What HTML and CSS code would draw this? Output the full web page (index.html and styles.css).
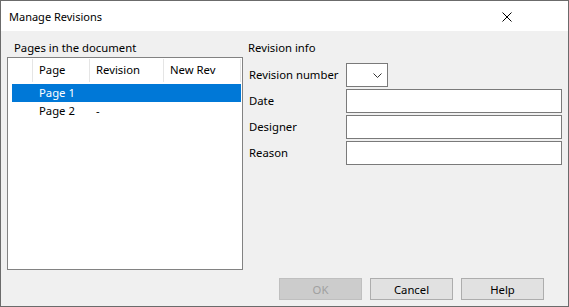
FILE: index.html
```html
<!DOCTYPE html>
<html lang="en">
<head>
    <meta charset="UTF-8">
    <title>Manage Revisions</title>
    <link rel="stylesheet" href="styles.css">
</head>
<body>
    <div class="dialog">
        <div class="titlebar">
            <span class="title">Manage Revisions</span>
            <button class="close-btn" aria-label="Close">
                <svg width="10" height="10" viewBox="0 0 10 10">
                    <path d="M0.5 0.5 L9.5 9.5 M9.5 0.5 L0.5 9.5" stroke="#000" stroke-width="1" fill="none"/>
                </svg>
            </button>
        </div>

        <div class="dialog-body">
            <div class="main">
                <div class="pages-group">
                    <div class="group-label">Pages in the document</div>
                    <div class="listview">
                        <div class="lv-header">
                            <div class="lv-col col-icon"></div>
                            <div class="lv-col col-page">Page</div>
                            <div class="lv-col col-rev">Revision</div>
                            <div class="lv-col col-new">New Rev</div>
                        </div>
                        <div class="lv-rows">
                            <div class="lv-row selected">
                                <span class="cell col-page">Page 1</span>
                                <span class="cell col-rev"></span>
                                <span class="cell col-new"></span>
                            </div>
                            <div class="lv-row">
                                <span class="cell col-page">Page 2</span>
                                <span class="cell col-rev">-</span>
                                <span class="cell col-new"></span>
                            </div>
                        </div>
                    </div>
                </div>

                <div class="info-group">
                    <div class="group-label">Revision info</div>
                    <div class="info-form">
                        <label class="field-label">Revision number</label>
                        <div class="combo">
                            <svg width="9" height="5" viewBox="0 0 9 5">
                                <path d="M0.5 0.5 L4.5 4.5 L8.5 0.5" stroke="#333" stroke-width="1" fill="none"/>
                            </svg>
                        </div>

                        <label class="field-label">Date</label>
                        <input class="text-input" type="text">

                        <label class="field-label">Designer</label>
                        <input class="text-input" type="text">

                        <label class="field-label">Reason</label>
                        <input class="text-input" type="text">
                    </div>
                </div>
            </div>

            <div class="button-row">
                <button class="btn" disabled>OK</button>
                <button class="btn">Cancel</button>
                <button class="btn">Help</button>
            </div>
        </div>
    </div>
</body>
</html>
```

FILE: styles.css
```css
* {
    margin: 0;
    padding: 0;
    box-sizing: border-box;
}

body {
    width: 569px;
    height: 307px;
    font-family: "Noto Sans", "Open Sans", sans-serif;
    font-size: 11.3px;
    color: #000;
    background: #fff;
}

.dialog {
    width: 569px;
    height: 307px;
    border: 1px solid #6b6b6b;
    background: #f0f0f0;
    display: flex;
    flex-direction: column;
}

.titlebar {
    height: 30px;
    background: #fff;
    display: flex;
    align-items: center;
    justify-content: space-between;
    padding-left: 8px;
    padding-right: 56px;
}

.title {
    font-size: 11px;
    line-height: 16px;
    margin-top: 1px;
}

.close-btn {
    border: none;
    background: none;
    width: 10px;
    height: 10px;
    display: flex;
    margin-top: 1px;
}

.dialog-body {
    flex: 1;
    padding: 8px 0 0 6px;
    display: flex;
    flex-direction: column;
}

.main {
    display: flex;
    gap: 5px;
}

.group-label {
    height: 18px;
    line-height: 18px;
    padding-left: 7px;
}

.info-group .group-label {
    padding-left: 0;
}

/* list view */
.listview {
    width: 236px;
    height: 213px;
    background: #fff;
    border: 1px solid #828282;
}

.lv-header {
    display: flex;
    height: 23px;
    margin-top: 1px;
}

.lv-col {
    border-right: 1px solid #e5e5e5;
    line-height: 22px;
    padding-left: 6px;
}

.col-icon {
    width: 25px;
}

.col-page {
    width: 57px;
}

.col-rev {
    width: 74px;
}

.col-new {
    width: 77px;
}

.lv-rows {
    margin-top: 2px;
}

.lv-row {
    display: flex;
    height: 18px;
    line-height: 18px;
    margin-left: 4px;
    width: 229px;
}

.lv-row .col-page {
    margin-left: 21px;
    width: 57px;
    padding-left: 6px;
}

.lv-row .col-rev {
    padding-left: 6px;
}

.lv-row.selected {
    background: #0078d7;
    color: #fff;
}

/* revision info form */
.info-form {
    margin-top: 6px;
    display: grid;
    grid-template-columns: 98px 216px;
    grid-auto-rows: 24px;
    row-gap: 2px;
    align-items: center;
}

.field-label {
    padding-left: 1px;
    line-height: 16px;
}

.combo {
    width: 42px;
    height: 24px;
    background: #fff;
    border: 1px solid #7a7a7a;
    display: flex;
    align-items: center;
    justify-content: flex-end;
    padding-right: 5px;
}

.text-input {
    width: 216px;
    height: 24px;
    border: 1px solid #7a7a7a;
    background: #fff;
    font: inherit;
}

/* buttons */
.button-row {
    display: flex;
    justify-content: flex-end;
    gap: 8px;
    margin-top: 8px;
    padding-right: 24px;
}

.btn {
    width: 83px;
    height: 22px;
    background: #e1e1e1;
    border: 1px solid #adadad;
    font: inherit;
    color: #000;
}

.btn:disabled {
    background: #cccccc;
    border-color: #bfbfbf;
    color: #a0a0a0;
}
```
